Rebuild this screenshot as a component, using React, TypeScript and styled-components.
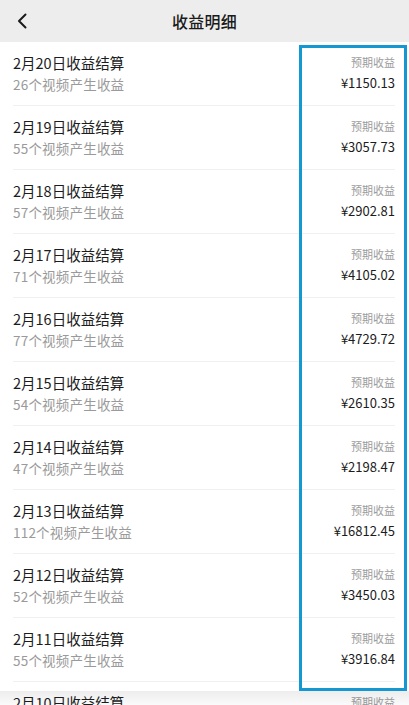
import React from 'react';
import styled, { createGlobalStyle } from 'styled-components';

const GlobalStyle = createGlobalStyle`
  * {
    box-sizing: border-box;
  }

  body {
    margin: 0;
    background-color: #ffffff;
    font-family: 'Noto Sans CJK SC', 'Noto Sans', sans-serif;
  }
`;

const Page = styled.div`
  position: relative;
  width: 409px;
  height: 705px;
  overflow: hidden;
  background-color: #ffffff;
`;

const Header = styled.header`
  position: relative;
  display: flex;
  align-items: center;
  justify-content: center;
  height: 42px;
  background-color: #ededed;
`;

const BackButton = styled.button`
  position: absolute;
  left: 10px;
  top: 9px;
  display: flex;
  align-items: center;
  justify-content: center;
  width: 24px;
  height: 24px;
  padding: 0;
  border: none;
  background: none;
`;

const Title = styled.h1`
  margin: 0;
  font-size: 16px;
  font-weight: 500;
  color: #1a1a1a;
  letter-spacing: 0.2px;
`;

const List = styled.ul`
  margin: 0;
  padding: 0;
  list-style: none;
`;

const Row = styled.li`
  display: flex;
  justify-content: space-between;
  height: 64px;
  margin: 0 14px 0 13px;
  padding-top: 10px;
  border-bottom: 1px solid #f0f0f0;
`;

const Info = styled.div`
  display: flex;
  flex-direction: column;
`;

const RowTitle = styled.span`
  font-size: 14.5px;
  line-height: 22px;
  font-weight: 400;
  color: #1c1c1c;
`;

const RowSub = styled.span`
  font-size: 13.5px;
  line-height: 20px;
  color: #9a9a9a;
  letter-spacing: 0.2px;
`;

const Earnings = styled.div`
  display: flex;
  flex-direction: column;
  align-items: flex-end;
`;

const EarningsLabel = styled.span`
  font-size: 11px;
  line-height: 20px;
  color: #9c9c9c;
`;

const Amount = styled.span`
  font-size: 13px;
  line-height: 22px;
  font-weight: 400;
  color: #1c1c1c;
`;

const Highlight = styled.div`
  position: absolute;
  left: 299px;
  top: 45px;
  width: 108px;
  height: 646px;
  border: 3px solid #1597d2;
  pointer-events: none;
`;

const BottomFade = styled.div`
  position: absolute;
  left: 0;
  right: 0;
  bottom: 0;
  height: 14px;
  background: linear-gradient(to bottom, rgba(0, 0, 0, 0.07), rgba(0, 0, 0, 0.02));
  pointer-events: none;
`;

interface IRecord {
  date: string;
  videos: number;
  amount: string;
}

const records: IRecord[] = [
  { date: '2月20日', videos: 26, amount: '1150.13' },
  { date: '2月19日', videos: 55, amount: '3057.73' },
  { date: '2月18日', videos: 57, amount: '2902.81' },
  { date: '2月17日', videos: 71, amount: '4105.02' },
  { date: '2月16日', videos: 77, amount: '4729.72' },
  { date: '2月15日', videos: 54, amount: '2610.35' },
  { date: '2月14日', videos: 47, amount: '2198.47' },
  { date: '2月13日', videos: 112, amount: '16812.45' },
  { date: '2月12日', videos: 52, amount: '3450.03' },
  { date: '2月11日', videos: 55, amount: '3916.84' },
  { date: '2月10日', videos: 49, amount: '2875.60' },
];

const App = () => (
  <Page>
    <GlobalStyle />
    <Header>
      <BackButton aria-label="返回">
        <svg width="12" height="16" viewBox="0 0 12 16" fill="none">
          <path d="M9.5 1.5 L3 8 L9.5 14.5" stroke="#1a1a1a" strokeWidth="2" strokeLinecap="round" strokeLinejoin="round" />
        </svg>
      </BackButton>
      <Title>收益明细</Title>
    </Header>
    <List>
      {records.map((r) => (
        <Row key={r.date}>
          <Info>
            <RowTitle>{r.date}收益结算</RowTitle>
            <RowSub>{r.videos}个视频产生收益</RowSub>
          </Info>
          <Earnings>
            <EarningsLabel>预期收益</EarningsLabel>
            <Amount>¥{r.amount}</Amount>
          </Earnings>
        </Row>
      ))}
    </List>
    <Highlight />
    <BottomFade />
  </Page>
);

export default App;
